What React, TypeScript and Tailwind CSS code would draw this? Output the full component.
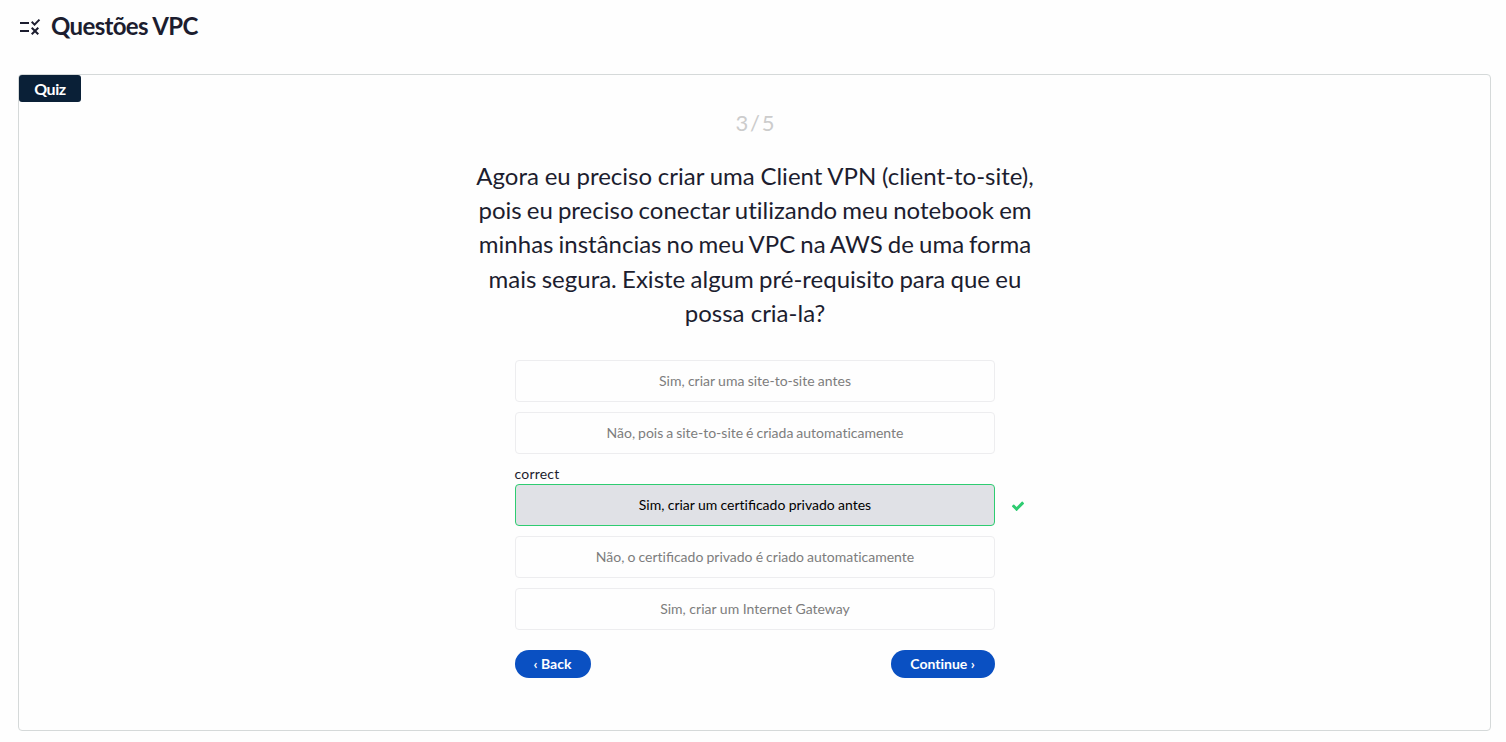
import React from "react";

function Option({ text, spacing = "" }: { text: React.ReactNode; spacing?: string }) {
  return (
    <button className={`mb-2.5 block h-[42px] w-full rounded border border-[#ededef] pb-px pl-px text-[14px] leading-5 text-[#7d7d7d] ${spacing}`}>
      {text}
    </button>
  );
}

function Fi() {
  return <span className="[font-variant-ligatures:common-ligatures]">fi</span>;
}

export default function App() {
  return (
    <main className="h-[742px] overflow-hidden bg-[#fefefe] font-['Lato',sans-serif] text-[#1c1d2f] [font-variant-ligatures:no-common-ligatures]">
      <header className="flex h-[74px] items-start pt-[8px] pl-[18px]">
        <svg className="mt-[7px] mr-[9px] h-6 w-6" viewBox="0 0 24 24" fill="currentColor">
          <path d="M16.54 11 13 7.46l1.41-1.41 2.12 2.12 4.24-4.24 1.41 1.41L16.54 11zM11 7H2v2h9V7zm10 6.41L19.59 12 17 14.59 14.41 12 13 13.41 15.59 16 13 18.59 14.41 20 17 17.41 19.59 20 21 18.59 18.41 16 21 13.41zM11 15H2v2h9v-2z" />
        </svg>
        <h1 className="text-[24px] leading-[36px] font-bold tracking-[-0.65px]">Questões VPC</h1>
      </header>
      <section className="mr-[15px] ml-[18px] h-[657px] rounded border border-[#d5d9d9]">
        <div className="flex h-[27px] w-[62px] items-center justify-center rounded-[3px] bg-[#0a2037] pt-px text-[16px] font-bold tracking-[-0.4px] text-white">Quiz</div>
        <div className="mx-auto w-[560px] text-center whitespace-nowrap">
          <p className="mt-[3px] text-[22px] leading-[36px] [word-spacing:-2px] tracking-[-0.9px] text-[#cccccc]">3 / 5</p>
          <h2 className="mt-[18px] pl-px text-[24px] leading-[34.2px]">
            <span className="[word-spacing:-0.4px]">Agora eu preciso criar uma Client VPN (client-to-site),</span><br />
            <span className="[word-spacing:-1.05px]">pois eu preciso conectar utilizando meu notebook em</span><br />
            <span className="[word-spacing:-1.1px]">minhas instâncias no meu VPC na AWS de uma forma</span><br />
            <span className="[word-spacing:-0.85px]">mais segura. Existe algum pré-requisito para que eu</span><br />
            possa cria-la?
          </h2>
        </div>
        <div className="mx-auto mt-[30px] w-[480px]">
          <Option text="Sim, criar uma site-to-site antes" spacing="[word-spacing:-0.3px]" />
          <Option text="Não, pois a site-to-site é criada automaticamente" spacing="[word-spacing:-0.6px]" />
          <p className="h-5 text-[14px] leading-5 tracking-[0.2px]">correct</p>
          <div className="mb-2.5 flex w-[520px] items-center">
            <button className="h-[42px] w-[480px] shrink-0 rounded border border-[#2ecc71] bg-[#e0e1e6] pb-px pl-px text-[14px] [word-spacing:-0.3px] text-black">
              Sim, criar um certi<Fi />cado privado antes
            </button>
            <svg className="mt-[2px] ml-4 h-[14px] w-[14px] text-[#2ecc71]" viewBox="0 0 1792 1792" fill="currentColor">
              <path d="M1671 566q0 40-28 68l-724 724-136 136q-28 28-68 28t-68-28l-136-136-362-362q-28-28-28-68t28-68l136-136q28-28 68-28t68 28l294 295 656-657q28-28 68-28t68 28l136 136q28 28 28 68z" />
            </svg>
          </div>
          <Option text={<>Não, o certi<Fi />cado privado é criado automaticamente</>} spacing="[word-spacing:-0.5px]" />
          <Option text="Sim, criar um Internet Gateway" />
          <div className="mt-5 flex justify-between text-[14px] font-bold text-white">
            <button className="h-7 w-[76px] rounded-full bg-[#0a50c2] pb-px">‹ Back</button>
            <button className="h-7 w-[104px] rounded-full bg-[#0a50c2] pb-px">Continue ›</button>
          </div>
        </div>
      </section>
    </main>
  );
}
